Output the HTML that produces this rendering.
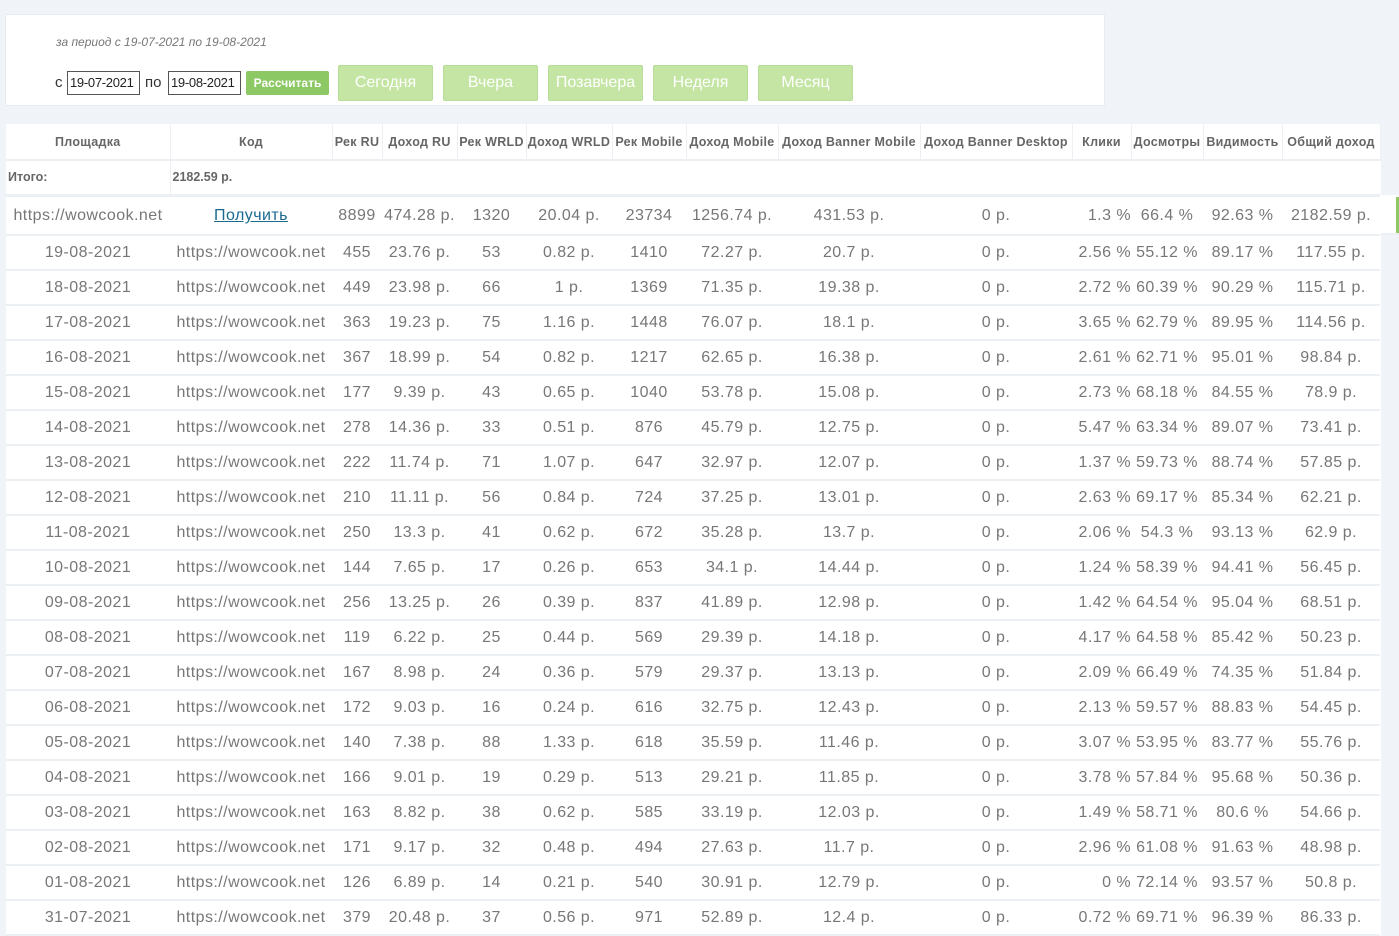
<!DOCTYPE html>
<html><head><meta charset="utf-8"><style>
*{box-sizing:border-box;margin:0;padding:0}
body{width:1399px;height:934px;overflow:hidden;background:#f0f3f7;font-family:"Liberation Sans",sans-serif;color:#777;position:relative}
.panel{position:absolute;left:5px;top:14px;width:1100px;height:92px;background:#fff;border:1px solid #e8ecf0}
.per{position:absolute;left:50px;top:20px;font-size:12px;font-style:italic;color:#777}
.lbl{position:absolute;top:59px;font-size:15px;color:#333}
.inp{position:absolute;top:56px;height:24px;width:73px;border:1px solid #555;font-size:13px;color:#222;padding:3px 2px;letter-spacing:-.3px}
.calc{position:absolute;left:240px;top:56px;width:83px;height:24px;background:#8cc863;border-radius:2px;color:#fff;font-size:12px;text-align:center;line-height:24px;font-weight:bold}
.b{position:absolute;top:50px;width:95px;height:36px;background:#c4e5a4;border:1px solid #b8dd97;border-radius:2px;color:#fff;font-size:16px;text-align:center;line-height:34px}
table{position:absolute;left:6px;top:124px;border-collapse:collapse;table-layout:fixed;width:1374px;background:#fff}
td,th{white-space:nowrap;overflow:hidden;text-align:center}
th{height:36px;font-size:12.5px;font-weight:bold;color:#666;border-right:1px solid #eceff3;border-bottom:2px solid #eceff3;letter-spacing:.3px}
tr.it td{height:35px;font-size:12.5px;font-weight:bold;color:#666;text-align:left;padding-left:2px;border-bottom:3px solid #eceff3}
tr.s td{height:40px;padding-top:2px;font-size:16px;color:#777;border-bottom:2px solid #eceff3;letter-spacing:.45px}
tr.r td{height:35px;padding-top:1px;font-size:16px;color:#777;border-bottom:2px solid #eceff3;letter-spacing:.45px}
a{color:#1a6a90;text-decoration:underline}
.bar{position:absolute;left:1396px;top:197px;width:3px;height:36px;background:#8cc863}
.ext{position:absolute;left:1380px;top:195px;width:19px;height:40px;background:#fff;border-bottom:2px solid #eceff3}
</style></head><body>
<div class="panel">
<div class="per">за период с 19-07-2021 по 19-08-2021</div>
<div class="lbl" style="left:49px">с</div>
<div class="inp" style="left:61px">19-07-2021</div>
<div class="lbl" style="left:139px">по</div>
<div class="inp" style="left:162px">19-08-2021</div>
<div class="calc">Рассчитать</div>
<div class="b" style="left:332px">Сегодня</div>
<div class="b" style="left:437px">Вчера</div>
<div class="b" style="left:542px">Позавчера</div>
<div class="b" style="left:647px">Неделя</div>
<div class="b" style="left:752px">Месяц</div>
</div>
<div class="ext"></div><div class="bar"></div>
<table>
<colgroup><col style="width:164px"><col style="width:162px"><col style="width:50px"><col style="width:75px"><col style="width:69px"><col style="width:86px"><col style="width:74px"><col style="width:92px"><col style="width:142px"><col style="width:152px"><col style="width:59px"><col style="width:72px"><col style="width:79px"><col style="width:98px"></colgroup>
<tr><th>Площадка</th><th>Код</th><th>Рек RU</th><th>Доход RU</th><th>Рек WRLD</th><th>Доход WRLD</th><th>Рек Mobile</th><th>Доход Mobile</th><th>Доход Banner Mobile</th><th>Доход Banner Desktop</th><th>Клики</th><th>Досмотры</th><th>Видимость</th><th>Общий доход</th></tr>
<tr class="it"><td style="border-right:1px solid #eceff3">Итого:</td><td colspan="13">2182.59 р.</td></tr>
<tr class="s"><td>https://wowcook.net</td><td><a>Получить</a></td><td>8899</td><td>474.28 р.</td><td>1320</td><td>20.04 р.</td><td>23734</td><td>1256.74 р.</td><td>431.53 р.</td><td>0 р.</td><td style="text-align:right">1.3 %</td><td>66.4 %</td><td>92.63 %</td><td>2182.59 р.</td></tr>
<tr class="r"><td>19-08-2021</td><td>https://wowcook.net</td><td>455</td><td>23.76 р.</td><td>53</td><td>0.82 р.</td><td>1410</td><td>72.27 р.</td><td>20.7 р.</td><td>0 р.</td><td style="text-align:right">2.56 %</td><td>55.12 %</td><td>89.17 %</td><td>117.55 р.</td></tr>
<tr class="r"><td>18-08-2021</td><td>https://wowcook.net</td><td>449</td><td>23.98 р.</td><td>66</td><td>1 р.</td><td>1369</td><td>71.35 р.</td><td>19.38 р.</td><td>0 р.</td><td style="text-align:right">2.72 %</td><td>60.39 %</td><td>90.29 %</td><td>115.71 р.</td></tr>
<tr class="r"><td>17-08-2021</td><td>https://wowcook.net</td><td>363</td><td>19.23 р.</td><td>75</td><td>1.16 р.</td><td>1448</td><td>76.07 р.</td><td>18.1 р.</td><td>0 р.</td><td style="text-align:right">3.65 %</td><td>62.79 %</td><td>89.95 %</td><td>114.56 р.</td></tr>
<tr class="r"><td>16-08-2021</td><td>https://wowcook.net</td><td>367</td><td>18.99 р.</td><td>54</td><td>0.82 р.</td><td>1217</td><td>62.65 р.</td><td>16.38 р.</td><td>0 р.</td><td style="text-align:right">2.61 %</td><td>62.71 %</td><td>95.01 %</td><td>98.84 р.</td></tr>
<tr class="r"><td>15-08-2021</td><td>https://wowcook.net</td><td>177</td><td>9.39 р.</td><td>43</td><td>0.65 р.</td><td>1040</td><td>53.78 р.</td><td>15.08 р.</td><td>0 р.</td><td style="text-align:right">2.73 %</td><td>68.18 %</td><td>84.55 %</td><td>78.9 р.</td></tr>
<tr class="r"><td>14-08-2021</td><td>https://wowcook.net</td><td>278</td><td>14.36 р.</td><td>33</td><td>0.51 р.</td><td>876</td><td>45.79 р.</td><td>12.75 р.</td><td>0 р.</td><td style="text-align:right">5.47 %</td><td>63.34 %</td><td>89.07 %</td><td>73.41 р.</td></tr>
<tr class="r"><td>13-08-2021</td><td>https://wowcook.net</td><td>222</td><td>11.74 р.</td><td>71</td><td>1.07 р.</td><td>647</td><td>32.97 р.</td><td>12.07 р.</td><td>0 р.</td><td style="text-align:right">1.37 %</td><td>59.73 %</td><td>88.74 %</td><td>57.85 р.</td></tr>
<tr class="r"><td>12-08-2021</td><td>https://wowcook.net</td><td>210</td><td>11.11 р.</td><td>56</td><td>0.84 р.</td><td>724</td><td>37.25 р.</td><td>13.01 р.</td><td>0 р.</td><td style="text-align:right">2.63 %</td><td>69.17 %</td><td>85.34 %</td><td>62.21 р.</td></tr>
<tr class="r"><td>11-08-2021</td><td>https://wowcook.net</td><td>250</td><td>13.3 р.</td><td>41</td><td>0.62 р.</td><td>672</td><td>35.28 р.</td><td>13.7 р.</td><td>0 р.</td><td style="text-align:right">2.06 %</td><td>54.3 %</td><td>93.13 %</td><td>62.9 р.</td></tr>
<tr class="r"><td>10-08-2021</td><td>https://wowcook.net</td><td>144</td><td>7.65 р.</td><td>17</td><td>0.26 р.</td><td>653</td><td>34.1 р.</td><td>14.44 р.</td><td>0 р.</td><td style="text-align:right">1.24 %</td><td>58.39 %</td><td>94.41 %</td><td>56.45 р.</td></tr>
<tr class="r"><td>09-08-2021</td><td>https://wowcook.net</td><td>256</td><td>13.25 р.</td><td>26</td><td>0.39 р.</td><td>837</td><td>41.89 р.</td><td>12.98 р.</td><td>0 р.</td><td style="text-align:right">1.42 %</td><td>64.54 %</td><td>95.04 %</td><td>68.51 р.</td></tr>
<tr class="r"><td>08-08-2021</td><td>https://wowcook.net</td><td>119</td><td>6.22 р.</td><td>25</td><td>0.44 р.</td><td>569</td><td>29.39 р.</td><td>14.18 р.</td><td>0 р.</td><td style="text-align:right">4.17 %</td><td>64.58 %</td><td>85.42 %</td><td>50.23 р.</td></tr>
<tr class="r"><td>07-08-2021</td><td>https://wowcook.net</td><td>167</td><td>8.98 р.</td><td>24</td><td>0.36 р.</td><td>579</td><td>29.37 р.</td><td>13.13 р.</td><td>0 р.</td><td style="text-align:right">2.09 %</td><td>66.49 %</td><td>74.35 %</td><td>51.84 р.</td></tr>
<tr class="r"><td>06-08-2021</td><td>https://wowcook.net</td><td>172</td><td>9.03 р.</td><td>16</td><td>0.24 р.</td><td>616</td><td>32.75 р.</td><td>12.43 р.</td><td>0 р.</td><td style="text-align:right">2.13 %</td><td>59.57 %</td><td>88.83 %</td><td>54.45 р.</td></tr>
<tr class="r"><td>05-08-2021</td><td>https://wowcook.net</td><td>140</td><td>7.38 р.</td><td>88</td><td>1.33 р.</td><td>618</td><td>35.59 р.</td><td>11.46 р.</td><td>0 р.</td><td style="text-align:right">3.07 %</td><td>53.95 %</td><td>83.77 %</td><td>55.76 р.</td></tr>
<tr class="r"><td>04-08-2021</td><td>https://wowcook.net</td><td>166</td><td>9.01 р.</td><td>19</td><td>0.29 р.</td><td>513</td><td>29.21 р.</td><td>11.85 р.</td><td>0 р.</td><td style="text-align:right">3.78 %</td><td>57.84 %</td><td>95.68 %</td><td>50.36 р.</td></tr>
<tr class="r"><td>03-08-2021</td><td>https://wowcook.net</td><td>163</td><td>8.82 р.</td><td>38</td><td>0.62 р.</td><td>585</td><td>33.19 р.</td><td>12.03 р.</td><td>0 р.</td><td style="text-align:right">1.49 %</td><td>58.71 %</td><td>80.6 %</td><td>54.66 р.</td></tr>
<tr class="r"><td>02-08-2021</td><td>https://wowcook.net</td><td>171</td><td>9.17 р.</td><td>32</td><td>0.48 р.</td><td>494</td><td>27.63 р.</td><td>11.7 р.</td><td>0 р.</td><td style="text-align:right">2.96 %</td><td>61.08 %</td><td>91.63 %</td><td>48.98 р.</td></tr>
<tr class="r"><td>01-08-2021</td><td>https://wowcook.net</td><td>126</td><td>6.89 р.</td><td>14</td><td>0.21 р.</td><td>540</td><td>30.91 р.</td><td>12.79 р.</td><td>0 р.</td><td style="text-align:right">0 %</td><td>72.14 %</td><td>93.57 %</td><td>50.8 р.</td></tr>
<tr class="r"><td>31-07-2021</td><td>https://wowcook.net</td><td>379</td><td>20.48 р.</td><td>37</td><td>0.56 р.</td><td>971</td><td>52.89 р.</td><td>12.4 р.</td><td>0 р.</td><td style="text-align:right">0.72 %</td><td>69.71 %</td><td>96.39 %</td><td>86.33 р.</td></tr>
</table>
</body></html>
